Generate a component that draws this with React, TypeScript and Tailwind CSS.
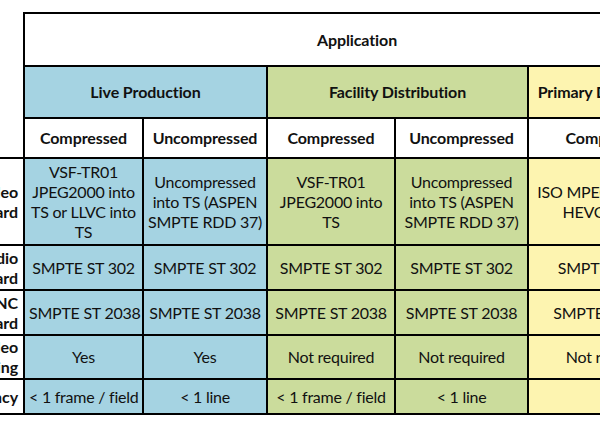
const cell = 'border-2 border-black text-center align-middle px-1 leading-5 whitespace-nowrap';
const body = 'tracking-[-0.25px]';
const head = 'font-bold tracking-[-0.1px]';
const blue = 'bg-[#a5d3e2]';
const green = 'bg-[#cbdc9c]';
const yellow = 'bg-[#fdf4b0]';

type Row = {
  label: string[];
  h: string;
  cells: string[][];
};

const rows: Row[] = [
  {
    label: ['Video', 'Standard'],
    h: 'h-[87px]',
    cells: [
      ['VSF-TR01', 'JPEG2000 into', 'TS or LLVC into', 'TS'],
      ['Uncompressed', 'into TS (ASPEN', 'SMPTE RDD 37)'],
      ['VSF-TR01', 'JPEG2000 into', 'TS'],
      ['Uncompressed', 'into TS (ASPEN', 'SMPTE RDD 37)'],
      ['ISO MPEG-2, AVC or', 'HEVC into TS'],
    ],
  },
  {
    label: ['Audio', 'Standard'],
    h: 'h-[45px]',
    cells: [['SMPTE ST 302'], ['SMPTE ST 302'], ['SMPTE ST 302'], ['SMPTE ST 302'], ['SMPTE ST 302']],
  },
  {
    label: ['ANC', 'Standard'],
    h: 'h-[45px]',
    cells: [['SMPTE ST 2038'], ['SMPTE ST 2038'], ['SMPTE ST 2038'], ['SMPTE ST 2038'], ['SMPTE ST 2038']],
  },
  {
    label: ['Video', 'Timing'],
    h: 'h-[44px]',
    cells: [['Yes'], ['Yes'], ['Not required'], ['Not required'], ['Not required']],
  },
  {
    label: ['Latency'],
    h: 'h-[35px]',
    cells: [['< 1 frame / field'], ['< 1 line'], ['< 1 frame / field'], ['< 1 line'], ['']],
  },
];

const colBg = [blue, blue, green, green, yellow];

function Lines({ lines }: { lines: string[] }) {
  return (
    <>
      {lines.map((l, i) => (
        <div key={i}>{l}</div>
      ))}
    </>
  );
}

export default function App() {
  return (
    <div className="w-[600px] h-[425px] overflow-hidden bg-white font-[Lato,sans-serif] text-[16px] text-[#111]">
      <table className="table-fixed border-collapse w-[776px] ml-[-87px] mt-[12px]">
        <colgroup>
          <col className="w-[110px]" />
          <col className="w-[119px]" />
          <col className="w-[124px]" />
          <col className="w-[128px]" />
          <col className="w-[133px]" />
          <col className="w-[162px]" />
        </colgroup>
        <tbody>
          <tr className="h-[53px]">
            <td rowSpan={3} className="border-0"></td>
            <th colSpan={5} className={`${cell} ${head} bg-white`}>
              Application
            </th>
          </tr>
          <tr className="h-[52px]">
            <th colSpan={2} className={`${cell} ${head} ${blue}`}>
              Live Production
            </th>
            <th colSpan={2} className={`${cell} ${head} ${green}`}>
              Facility Distribution
            </th>
            <th className={`${cell} ${head} ${yellow}`}>Primary Distribution</th>
          </tr>
          <tr className="h-[40px]">
            {['Compressed', 'Uncompressed', 'Compressed', 'Uncompressed', 'Compressed'].map((t, i) => (
              <th key={i} className={`${cell} ${head} bg-white`}>
                {t}
              </th>
            ))}
          </tr>
          {rows.map((r, ri) => (
            <tr key={ri} className={r.h}>
              <th className={`border-2 border-black text-right align-middle pr-[5px] leading-5 bg-white whitespace-nowrap ${head}`}>
                <Lines lines={r.label} />
              </th>
              {r.cells.map((c, ci) => (
                <td key={ci} className={`${cell} ${body} ${colBg[ci]}`}>
                  <Lines lines={c} />
                </td>
              ))}
            </tr>
          ))}
        </tbody>
      </table>
    </div>
  );
}
